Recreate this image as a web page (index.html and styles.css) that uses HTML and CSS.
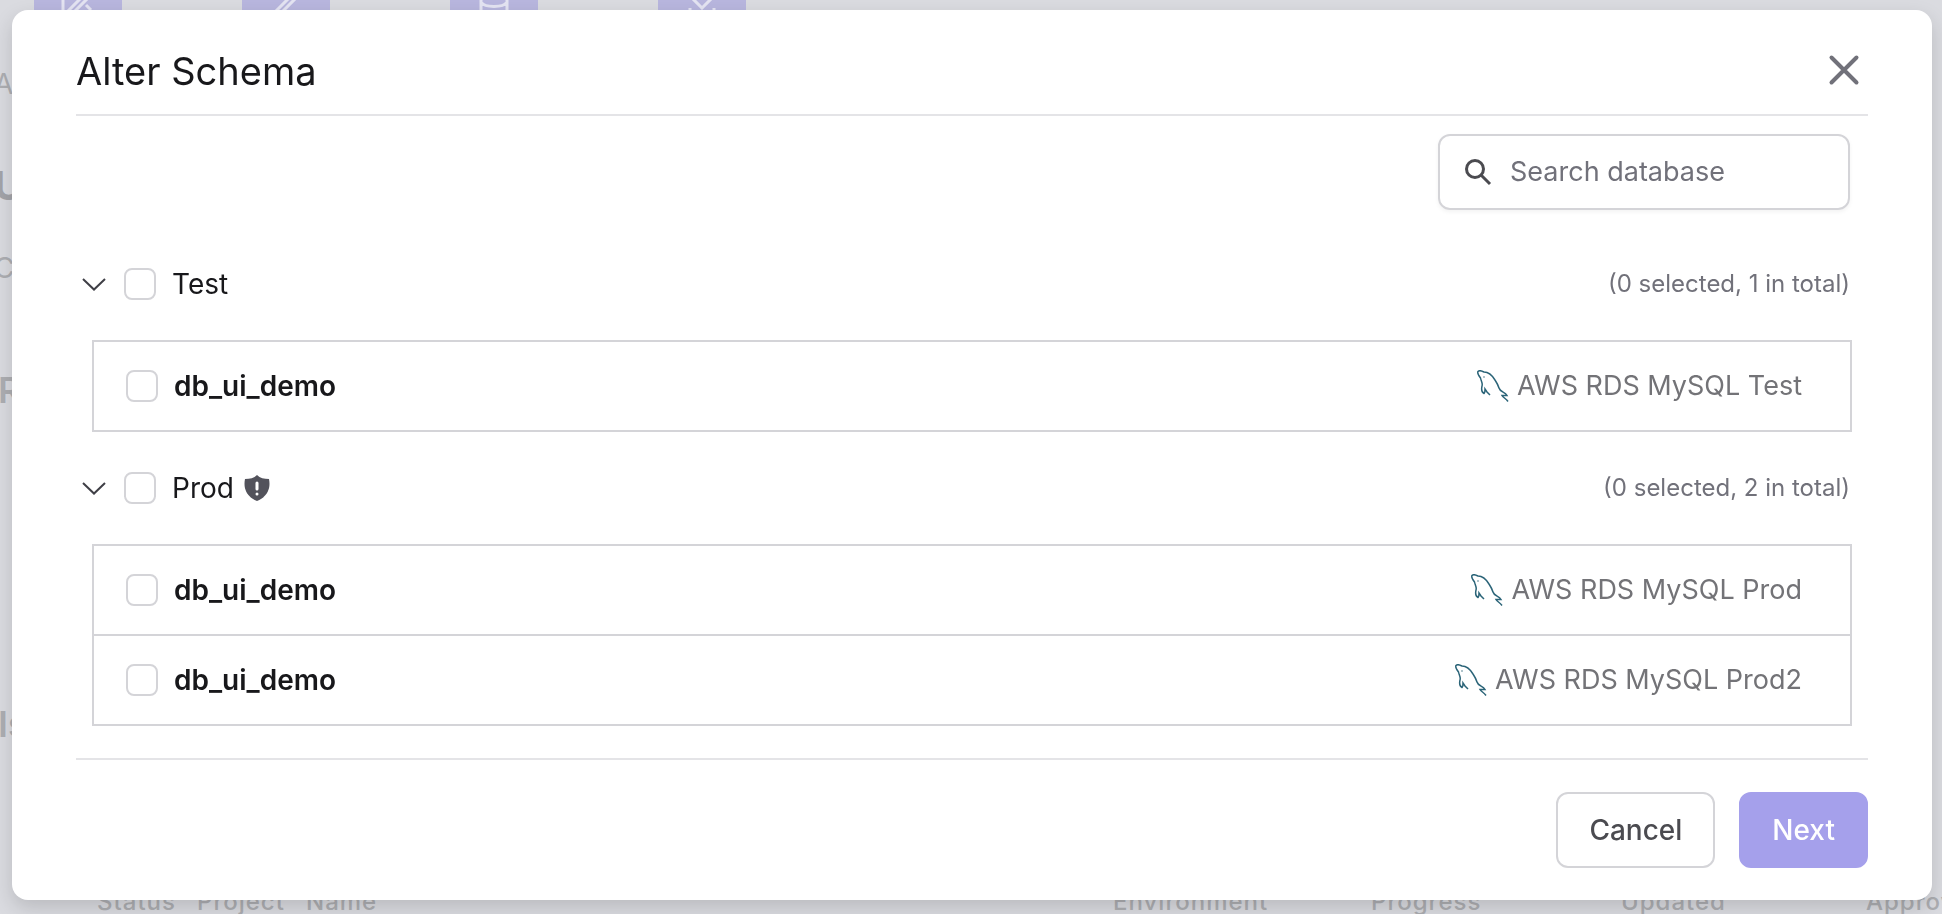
FILE: index.html
```html
<!DOCTYPE html>
<html lang="en">
<head>
  <meta charset="UTF-8" />
  <meta name="viewport" content="width=device-width, initial-scale=1.0" />
  <title>Alter Schema</title>
  <link rel="stylesheet" href="styles.css">
</head>
<body>
  <!-- page behind the dialog -->
  <div class="page" aria-hidden="true">
    <div class="quick-actions">
      <span class="action">
        <svg viewBox="0 0 40 40"><path d="M5 20v20M10 41L23 28M17 41L30 28M28 35l5 5" /></svg>
      </span>
      <span class="action">
        <svg viewBox="0 0 40 40"><path d="M10 41L23 28M17 41L30 28" /></svg>
      </span>
      <span class="action">
        <svg viewBox="0 0 40 40"><path d="M7 28v12M33 28v12M7 32c4 6 22 6 26 0" /></svg>
      </span>
      <span class="action">
        <svg viewBox="0 0 40 40"><path d="M10 28l10 10 10-10M8 38v2M32 38v2" /></svg>
      </span>
    </div>
    <div class="page-side">
      <span class="side-item">A</span>
      <span class="side-title">U</span>
      <span class="side-link">C</span>
      <span class="side-heading">R</span>
      <span class="side-heading side-issues">Is</span>
    </div>
    <div class="issue-head">
      <span>Status</span>
      <span>Project</span>
      <span>Name</span>
      <span>Environment</span>
      <span>Progress</span>
      <span>Updated</span>
      <span>Approver</span>
    </div>
  </div>

  <div class="overlay">
    <div class="modal" role="dialog" aria-modal="true" aria-labelledby="modalTitle">
      <header class="modal-header">
        <h1 id="modalTitle">Alter Schema</h1>
        <button class="close-btn" type="button" aria-label="Close">
          <svg viewBox="0 0 48 48"><path d="M11.5 10.5l25 25M36.5 10.5l-25 25" /></svg>
        </button>
      </header>

      <main class="modal-body">
        <label class="search">
          <svg viewBox="0 0 28 28"><circle cx="11" cy="11" r="8.5" /><path d="M17 17l9 9" /></svg>
          <input type="text" placeholder="Search database" aria-label="Search database" />
        </label>

        <section class="env">
          <div class="env-head">
            <button class="toggle" type="button" aria-label="Collapse Test">
              <svg viewBox="0 0 24 24"><path d="M1 7l11 10.500L23 7" /></svg>
            </button>
            <input type="checkbox" id="envTest" />
            <label for="envTest">Test</label>
            <span class="count">(0 selected, 1 in total)</span>
          </div>
          <ul class="db-list">
            <li>
              <input type="checkbox" id="db1" />
              <label for="db1">db_ui_demo</label>
              <span class="instance"><svg class="mysql" viewBox="0 0 32 32"><use href="#dolphin" /></svg>AWS RDS MySQL Test</span>
            </li>
          </ul>
        </section>

        <section class="env">
          <div class="env-head">
            <button class="toggle" type="button" aria-label="Collapse Prod">
              <svg viewBox="0 0 24 24"><path d="M1 7l11 10.500L23 7" /></svg>
            </button>
            <input type="checkbox" id="envProd" />
            <label for="envProd">Prod</label>
            <svg class="shield" viewBox="0 0 26 26"><path d="M13 0c3 3 7 4 12 4 2 10-2 18-12 22C3 22-1 14 1 4c5 0 9-1 12-4z" /><path class="mark" d="M13 8v6M13 19v0" /></svg>
            <span class="count">(0 selected, 2 in total)</span>
          </div>
          <ul class="db-list">
            <li>
              <input type="checkbox" id="db2" />
              <label for="db2">db_ui_demo</label>
              <span class="instance"><svg class="mysql" viewBox="0 0 32 32"><use href="#dolphin" /></svg>AWS RDS MySQL Prod</span>
            </li>
            <li>
              <input type="checkbox" id="db3" />
              <label for="db3">db_ui_demo</label>
              <span class="instance"><svg class="mysql" viewBox="0 0 32 32"><use href="#dolphin" /></svg>AWS RDS MySQL Prod2</span>
            </li>
          </ul>
        </section>
      </main>

      <footer class="modal-footer">
        <button class="btn" type="button">Cancel</button>
        <button class="btn btn-primary" type="button">Next</button>
      </footer>
    </div>
  </div>

  <svg class="sprite" width="0" height="0">
    <symbol id="dolphin" viewBox="0 0 32 32">
      <path d="M13 25c-1-1-2-2-3-3L8 19c0 2 0 4-1 4.500-2-1-3-3-2-7.500 1-3-1-5-1.500-8C2 6 0 3 1 1.500 2 0 5 1 7 2c4 0 8 3 11 8 2 3 3 5 4 8 1 4 6 4 8 7.500l-5 0c1 2 4 3 6 6M7 6.500v1" />
    </symbol>
  </svg>
</body>
</html>
```

FILE: styles.css
```css
* { box-sizing: border-box; }
body {
  font-family: Inter, "Liberation Sans", sans-serif;
  font-size: 28px;
  line-height: 40px;
  margin: 0;
  color: #18181b;
  background: #dadbe0;
}
h1, ul {
  margin: 0;
  padding: 0;
}
button, input {
  font: inherit;
  margin: 0;
}
button {
  cursor: pointer;
}
svg {
  display: block;
  flex: none;
  fill: none;
  stroke: currentColor;
}
.sprite {
  position: absolute;
}

/* page behind */
.page {
  height: 100vh;
  overflow: hidden;
  display: flex;
  flex-direction: column;
  color: #adaeb2;
}
.quick-actions {
  display: flex;
  gap: 120px;
  padding-left: 34px;
  height: 10px;
  align-items: flex-end;
}
.action {
  width: 88px;
  height: 88px;
  flex: none;
  display: flex;
  align-items: flex-end;
  justify-content: center;
  background: #b8b6de;
  color: #e4e4f2;
}
.action svg {
  width: 40px;
  height: 40px;
  stroke-width: 3;
}
.page-side {
  flex: 1;
  display: flex;
  flex-direction: column;
  align-items: flex-start;
}
.page-side span {
  margin-left: -6px;
}
.side-item {
  margin-top: 54px;
}
.side-title {
  font-size: 40px;
  font-weight: 700;
  margin-top: 62px;
  color: #a3a4a9;
}
.side-link {
  margin-top: 42px;
}
.page-side .side-heading {
  font-size: 36px;
  font-weight: 600;
  margin-top: 82px;
  margin-left: -2px;
}
.page-side .side-issues {
  margin-top: 294px;
}
.issue-head {
  display: grid;
  grid-template-columns: 100px 109px 807px 258px 250px 245px 1fr;
  padding-left: 97px;
  font-size: 24px;
  line-height: 32px;
  font-weight: 500;
  letter-spacing: 1px;
  margin-bottom: -4px;
}

/* dialog */
.overlay {
  position: fixed;
  inset: 0;
  padding: 10px 10px 14px 12px;
}
.modal {
  height: 100%;
  display: flex;
  flex-direction: column;
  background: #fff;
  padding: 0 64px 32px;
  border-radius: 16px;
  box-shadow: 0 8px 20px rgba(0, 0, 0, 0.15);
}
.modal-header {
  display: flex;
  align-items: center;
  justify-content: space-between;
  padding: 32px 0 14px;
  border-bottom: 2px solid #e4e4e7;
}
.modal-header h1 {
  font-size: 38px;
  line-height: 58px;
  font-weight: 400;
}
.close-btn {
  border: none;
  background: none;
  padding: 0;
  color: #71717a;
}
.close-btn svg {
  width: 48px;
  height: 48px;
  stroke-width: 4;
  stroke-linecap: round;
}
.modal-body {
  flex: 1;
  display: flex;
  flex-direction: column;
  gap: 18px;
  padding: 18px 18px 0 0;
}
.search {
  align-self: flex-end;
  display: flex;
  align-items: center;
  gap: 18px;
  width: 412px;
  height: 76px;
  margin-bottom: 18px;
  padding: 0 24px;
  border: 2px solid #d4d4d8;
  border-radius: 12px;
  box-shadow: 0 2px 4px rgba(0, 0, 0, 0.05);
  color: #4b4b50;
}
.search svg {
  width: 28px;
  height: 28px;
  stroke-width: 3;
}
.search input {
  flex: 1;
  min-width: 0;
  border: none;
  outline: none;
  padding: 0;
  font-size: 27px;
  background: none;
}
.search input::placeholder {
  color: #71717a;
  opacity: 1;
}
input[type="checkbox"] {
  appearance: none;
  width: 32px;
  height: 32px;
  margin-right: 16px;
  flex: none;
  border: 2px solid #d4d4d8;
  border-radius: 8px;
  background: #fff;
}
.env-head {
  display: flex;
  align-items: center;
  height: 76px;
}
.toggle {
  border: none;
  background: none;
  padding: 0;
  margin: 0 18px 0 6px;
  color: #3f3f46;
}
.toggle svg {
  width: 24px;
  height: 24px;
  stroke-width: 2;
}
.shield {
  width: 26px;
  height: 26px;
  margin-left: 10px;
  fill: #52525b;
  stroke: none;
}
.shield .mark {
  stroke: #fff;
  stroke-width: 3;
  stroke-linecap: round;
}
.count {
  margin-left: auto;
  font-size: 24px;
  color: #71717a;
}
.db-list {
  list-style: none;
  margin: 18px -2px 0 16px;
  border: 2px solid #d4d4d8;
}
.db-list li {
  display: flex;
  align-items: center;
  height: 88px;
  padding: 0 48px 0 32px;
}
.db-list li + li {
  height: 90px;
  border-top: 2px solid #d4d4d8;
}
.db-list label {
  font-weight: 600;
}
.instance {
  display: flex;
  align-items: center;
  gap: 8px;
  margin-left: auto;
  font-size: 27px;
  color: #737377;
}
.mysql {
  width: 32px;
  height: 32px;
  color: #2b6478;
  stroke-width: 1.5;
}
.modal-footer {
  display: flex;
  justify-content: flex-end;
  gap: 24px;
  padding-top: 32px;
  border-top: 2px solid #e4e4e7;
}
.btn {
  height: 76px;
  padding: 0 31px;
  font-weight: 500;
  color: #4b4b50;
  background: #fff;
  border: 2px solid #d4d4d8;
  border-radius: 12px;
}
.btn-primary {
  color: #fff;
  background: #a5a0eb;
  border-color: #a5a0eb;
}
```
